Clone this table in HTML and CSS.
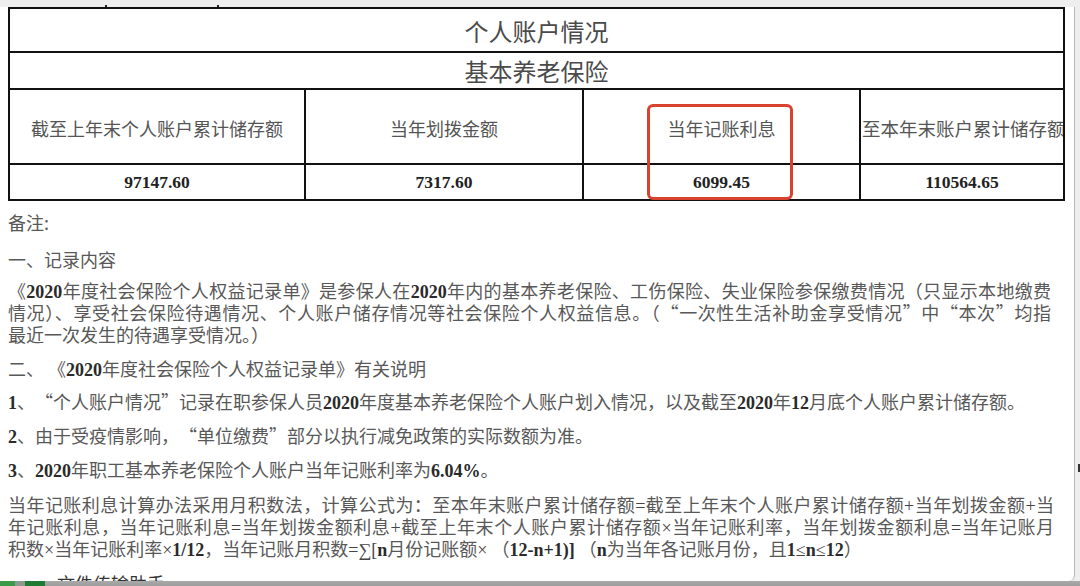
FILE: index.html
```html
<!DOCTYPE html>
<html lang="zh-CN">
<head>
<meta charset="utf-8">
<title>个人账户情况</title>
<link rel="stylesheet" href="styles.css">
</head>
<body>
<div class="page">
  <div class="topstrip"><span class="tick t1"></span><span class="tick t2"></span></div>
  <div class="sheet">
    <div class="paper">
      <div class="tablewrap">
        <div class="grid">
          <div class="cell title">个人账户情况</div>
          <div class="cell title">基本养老保险</div>
          <div class="cell head">截至上年末个人账户累计储存额</div>
          <div class="cell head">当年划拨金额</div>
          <div class="cell head">当年记账利息</div>
          <div class="cell head h4">至本年末账户累计储存额</div>
          <div class="cell val">97147.60</div>
          <div class="cell val">7317.60</div>
          <div class="cell val">6099.45</div>
          <div class="cell val">110564.65</div>
        </div>
        <div class="highlight"></div>
      </div>
      <div class="notes">
        <div class="ln big m1">备注:</div>
        <div class="ln big m2">一、记录内容</div>
        <div class="para p1">
          <div class="ln j">《<span class="n">2020</span>年度社会保险个人权益记录单》是参保人在<span class="n">2020</span>年内的基本养老保险、工伤保险、失业保险参保缴费情况（只显示本地缴费</div>
          <div class="ln j">情况）、享受社会保险待遇情况、个人账户储存情况等社会保险个人权益信息。（<span class="qo">“</span>一次性生活补助金享受情况<span class="qc">”</span>中<span class="qo">“</span>本次<span class="qc">”</span>均指</div>
          <div class="ln">最近一次发生的待遇享受情况。）</div>
        </div>
        <div class="ln big m3">二、 《<span class="n">2020</span>年度社会保险个人权益记录单》有关说明</div>
        <div class="ln big m4"><span class="n">1</span>、<span class="qo">“</span>个人账户情况<span class="qc">”</span>记录在职参保人员<span class="n">2020</span>年度基本养老保险个人账户划入情况，以及截至<span class="n">2020</span>年<span class="n">12</span>月底个人账户累计储存额。</div>
        <div class="ln big m5"><span class="n">2</span>、由于受疫情影响，<span class="qo">“</span>单位缴费<span class="qc">”</span>部分以执行减免政策的实际数额为准。</div>
        <div class="ln big m5"><span class="n">3</span>、<span class="n">2020</span>年职工基本养老保险个人账户当年记账利率为<span class="n">6.04%</span>。</div>
        <div class="para p2">
          <div class="ln j">当年记账利息计算办法采用月积数法，计算公式为：至本年末账户累计储存额<span class="s">=</span>截至上年末个人账户累计储存额<span class="s">+</span>当年划拨金额<span class="s">+</span>当</div>
          <div class="ln j">年记账利息，当年记账利息<span class="s">=</span>当年划拨金额利息<span class="s">+</span>截至上年末个人账户累计储存额<span class="s">×</span>当年记账利率，当年划拨金额利息<span class="s">=</span>当年记账月</div>
          <div class="ln">积数<span class="s">×</span>当年记账利率<span class="s">×</span><span class="n">1/12</span>，当年记账月积数<span class="s">=∑[</span><span class="n">n</span>月份记账额<span class="s">×</span> （<span class="n">12-n+1)]</span> （<span class="n">n</span>为当年各记账月份，且<span class="n">1</span><span class="s">≤</span><span class="n">n</span><span class="s">≤</span><span class="n">12</span>）</div>
        </div>
      </div>
    </div>
    <div class="gutter"><span class="mark"></span></div>
  </div>
  <div class="bottombar"><span class="icon"></span></div>
  <div class="chat">
    <span class="chatname">文件传输助手</span>
  </div>
</div>
</body>
</html>
```

FILE: styles.css
```css
html, body {
  margin: 0;
  padding: 0;
}
body {
  width: 1080px;
  height: 586px;
  overflow: hidden;
  background: #ececec;
  font-family: "Noto Sans CJK SC", "Noto Sans", sans-serif;
}
.page {
  position: relative;
  width: 1080px;
  height: 586px;
  display: flex;
  flex-direction: column;
}
.topstrip {
  height: 7px;
  flex: none;
  background: #eeeeee;
  display: flex;
  align-items: flex-end;
}
.tick {
  width: 2px;
  height: 2px;
  background: #222;
}
.t1 { margin-left: 105px; }
.t2 { margin-left: 110px; }
.sheet {
  display: flex;
  height: 574px;
  flex: none;
}
.paper {
  width: 1075px;
  background: #ffffff;
  border-right: 1px solid #b8b8b8;
  border-bottom-right-radius: 6px;
  padding-left: 8px;
  box-sizing: border-box;
  overflow: hidden;
}
.gutter {
  flex: 1;
  background: #eeeeee;
  display: flex;
  flex-direction: column;
  align-items: flex-end;
}
.mark {
  width: 2px;
  height: 8px;
  margin-top: 457px;
  background: #333;
}
.bottombar {
  height: 5px;
  flex: none;
  background: linear-gradient(#a9a9a9, #9c9c9c);
  display: flex;
  position: relative;
  z-index: 2;
}
.icon {
  width: 45px;
  height: 5px;
  background: linear-gradient(90deg, #3a9a48 0 15px, #8d9a8f 15px 25px, #1f7a34 25px 45px);
}
.tablewrap {
  position: relative;
  width: 1057px;
}
.grid {
  display: grid;
  grid-template-columns: 294px 276px 275px 202px;
  grid-template-rows: 42px 35px 73px 34px;
  gap: 2px;
  padding: 2px;
  background: #111;
}
.cell {
  background: #fff;
  display: flex;
  align-items: center;
  justify-content: center;
  white-space: nowrap;
  overflow: hidden;
}
.title {
  grid-column: 1 / -1;
  font-size: 24px;
  color: #4a4a4a;
}
.head {
  font-size: 18px;
  color: #555;
  padding-top: 3px;
}
.h4 {
  justify-content: flex-start;
  padding-left: 1px;
  font-size: 18.5px;
}
.val {
  font-family: "Liberation Serif", serif;
  font-weight: 700;
  font-size: 17.5px;
  color: #222;
}
.highlight {
  position: absolute;
  left: 639px;
  top: 97px;
  width: 146px;
  height: 96px;
  box-sizing: border-box;
  border: 3px solid #d8432f;
  border-radius: 6px;
}
.notes {
  padding-right: 20px;
  font-size: 18px;
  color: #585858;
}
.ln {
  height: 22px;
  line-height: 22px;
  white-space: nowrap;
}
.big {
  height: 24px;
  line-height: 24px;
}
.j {
  text-align: justify;
  text-align-last: justify;
}
.m1 { margin-top: 9px; }
.m2 { margin-top: 13px; }
.p1 { margin-top: 8px; padding-right: 3px; }
.m3 { margin-top: 11px; }
.m4 { margin-top: 9px; }
.m5 { margin-top: 10px; }
.p2 { margin-top: 12px; }
.n {
  font-family: "Liberation Serif", serif;
  font-weight: 700;
  color: #2a2a2a;
  line-height: 1;
}
.s {
  font-family: "Liberation Serif", serif;
  color: #444;
  line-height: 1;
}
.qo, .qc {
  display: inline-block;
  width: 18px;
  line-height: 1;
}
.qo { text-align: right; }
.qc { text-align: left; }
.chat {
  position: absolute;
  left: 57px;
  top: 574px;
  height: 7px;
  width: 260px;
  overflow: hidden;
  display: flex;
  align-items: flex-start;
}
.chatname {
  font-size: 18px;
  line-height: 18px;
  color: #333;
}
```
